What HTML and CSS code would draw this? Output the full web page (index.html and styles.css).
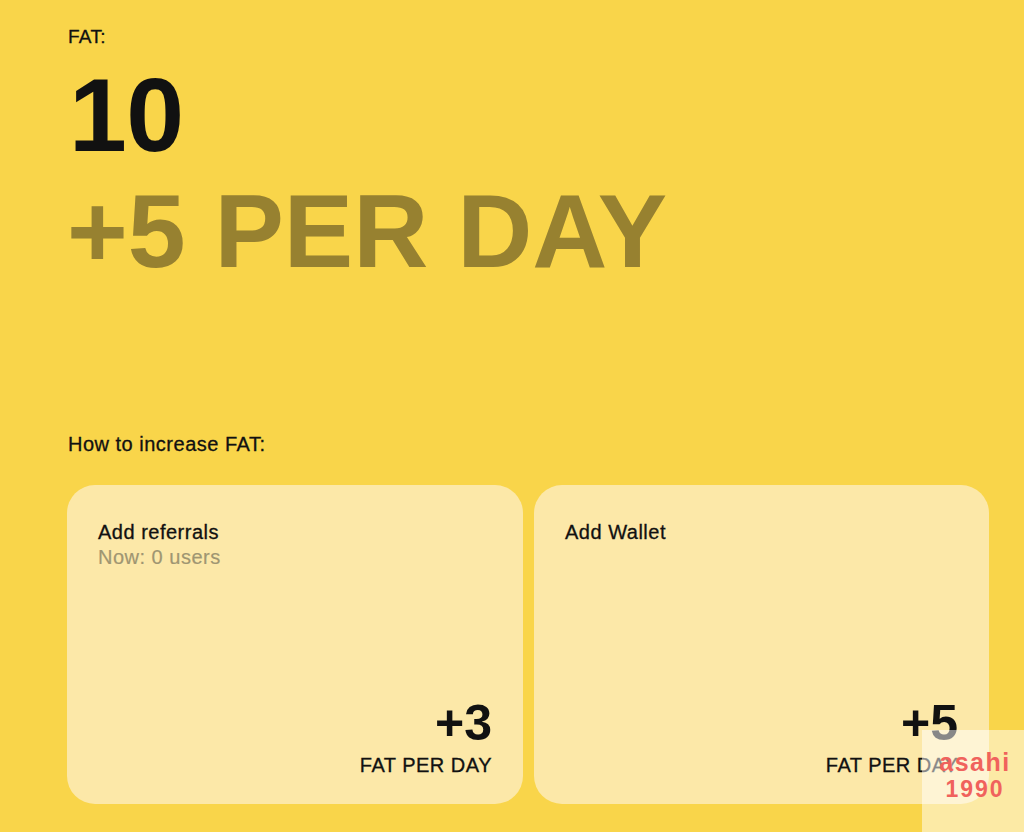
FILE: index.html
```html
<!DOCTYPE html>
<html>
<head>
<meta charset="utf-8">
<link rel="stylesheet" href="styles.css">
</head>
<body>
<main class="page">
  <div class="label">FAT:</div>
  <div class="big count">10</div>
  <div class="big rate">+5 PER DAY</div>
  <div class="howto">How to increase FAT:</div>
  <div class="cards">
    <div class="card">
      <div class="card-title">Add referrals</div>
      <div class="card-sub">Now: 0 users</div>
      <div class="card-bottom">
        <div class="amount">+3</div>
        <div class="unit">FAT PER DAY</div>
      </div>
    </div>
    <div class="card">
      <div class="card-title">Add Wallet</div>
      <div class="card-bottom">
        <div class="amount">+5</div>
        <div class="unit">FAT PER DAY</div>
      </div>
    </div>
  </div>
</main>
<div class="watermark"><span class="wm1">asahi</span><span class="wm2">1990</span></div>
</body>
</html>
```

FILE: styles.css
```css
html, body {
  margin: 0;
  padding: 0;
  background: #f9d54a;
  font-family: "Liberation Sans", Arial, sans-serif;
  color: #111;
}
.page {
  padding: 26px 35px 0 68px;
  height: 832px;
  box-sizing: border-box;
  overflow: hidden;
}
.label {
  font-size: 19px;
  line-height: 22px;
  letter-spacing: 0.3px;
  -webkit-text-stroke: 0.3px #111;
}
.big {
  font-size: 104px;
  font-weight: 700;
  line-height: 113px;
  margin-left: 1px;
  letter-spacing: -0.5px;
}
.count { margin-top: 11px; }
.rate {
  color: #978130;
  margin-left: -1px;
  margin-top: 3px;
  letter-spacing: 0;
}
.howto {
  margin-top: 144px;
  font-size: 20px;
  line-height: 24px;
  letter-spacing: 0.5px;
  -webkit-text-stroke: 0.3px #111;
}
.cards {
  margin-top: 29px;
  display: grid;
  grid-template-columns: 456px 455px;
  gap: 11px;
  margin-left: -1px;
}
.card {
  background: #fce8a8;
  border-radius: 28px;
  height: 319px;
  box-sizing: border-box;
  padding: 35px 31px 26px 31px;
  display: flex;
  flex-direction: column;
}
.card-title {
  font-size: 20px;
  line-height: 24px;
  letter-spacing: 0.5px;
  -webkit-text-stroke: 0.3px #111;
}
.card-sub {
  font-size: 20px;
  line-height: 26px;
  letter-spacing: 0.5px;
  color: #9f9672;
  -webkit-text-stroke: 0.2px #9f9672;
}
.card-bottom {
  margin-top: auto;
  text-align: right;
}
.amount {
  font-size: 50px;
  font-weight: 700;
  line-height: 54px;
}
.unit {
  font-size: 20px;
  line-height: 26px;
  letter-spacing: 0.5px;
  margin-top: 2px;
  -webkit-text-stroke: 0.3px #111;
}
.watermark {
  position: absolute;
  left: 922px;
  top: 730px;
  width: 102px;
  height: 102px;
  background: rgba(255, 255, 255, 0.5);
  display: flex;
  flex-direction: column;
  align-items: center;
  padding-top: 18px;
  padding-left: 4px;
  box-sizing: border-box;
  color: #f0625c;
  font-weight: 700;
}
.wm1 {
  font-size: 25px;
  line-height: 28px;
  letter-spacing: 1.5px;
}
.wm2 {
  font-size: 23px;
  line-height: 26px;
  letter-spacing: 2px;
}
```
